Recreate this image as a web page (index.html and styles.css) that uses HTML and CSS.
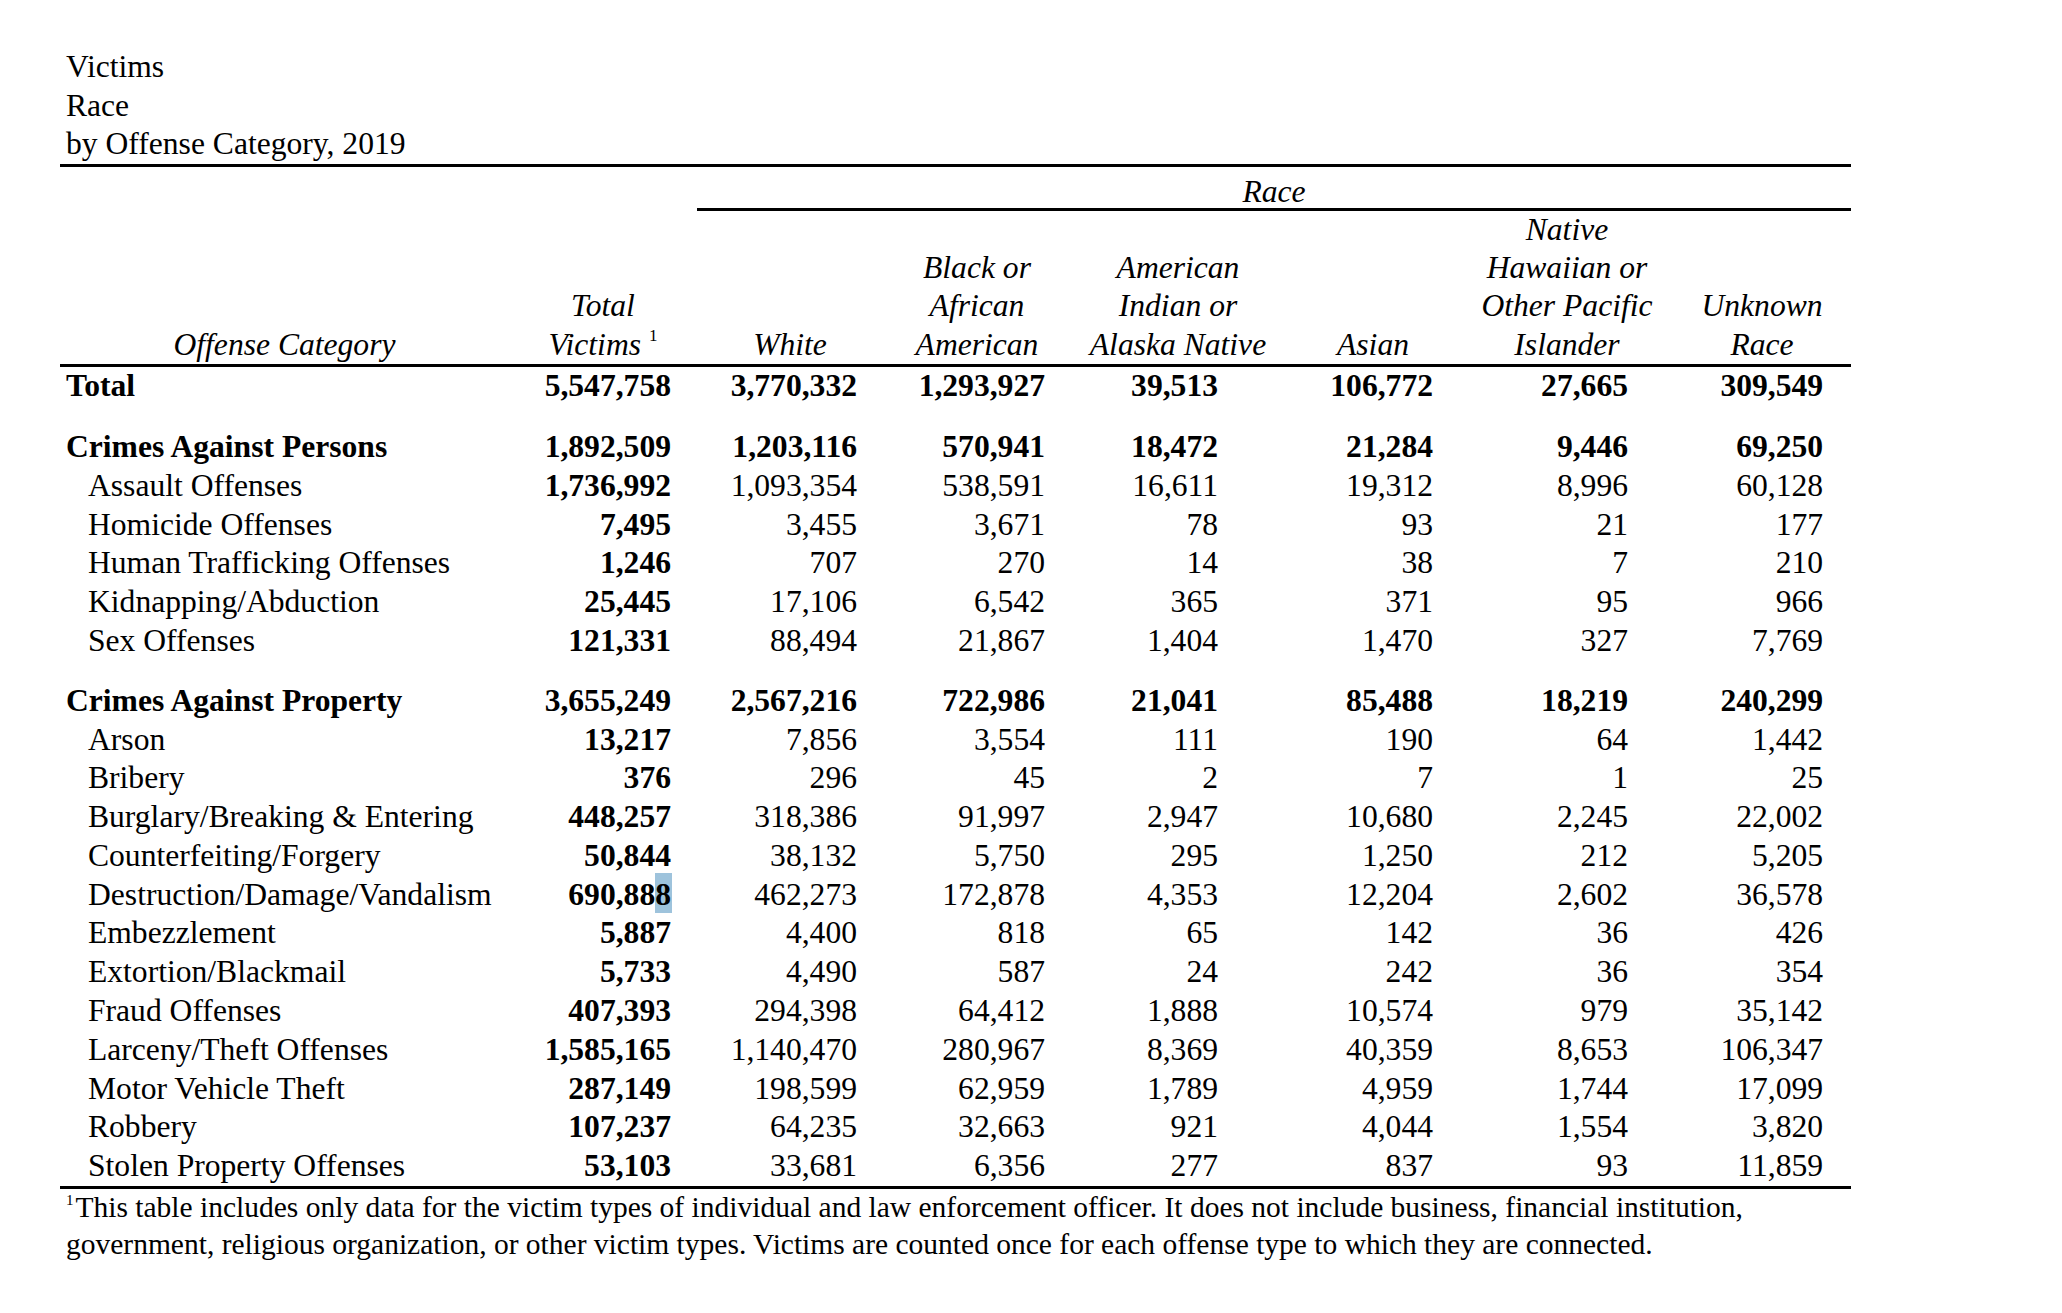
FILE: index.html
```html
<!DOCTYPE html>
<html lang="en">
<head>
<meta charset="utf-8">
<title>Victims Race by Offense Category, 2019</title>
<link rel="stylesheet" href="styles.css">
</head>
<body>
<div class="page">
  <div class="title">
    <div>Victims</div>
    <div>Race</div>
    <div>by Offense Category, 2019</div>
  </div>
  <table class="data">
    <colgroup>
      <col class="c-cat"><col class="c-total"><col class="c-white"><col class="c-black"><col class="c-amind"><col class="c-asian"><col class="c-nhpi"><col class="c-unk">
    </colgroup>
    <thead>
      <tr class="race-row">
        <th colspan="2"></th>
        <th colspan="6" class="race">Race</th>
      </tr>
      <tr class="head-row">
        <th>Offense Category</th>
        <th>Total<br>Victims <sup>1</sup></th>
        <th>White</th>
        <th>Black or<br>African<br>American</th>
        <th>American<br>Indian or<br>Alaska Native</th>
        <th>Asian</th>
        <th>Native<br>Hawaiian or<br>Other Pacific<br>Islander</th>
        <th>Unknown<br>Race</th>
      </tr>
    </thead>
    <tbody>
      <tr class="bold"><td class="cat">Total</td><td class="n1">5,547,758</td><td class="n2">3,770,332</td><td class="n3">1,293,927</td><td class="n4">39,513</td><td class="n5">106,772</td><td class="n6">27,665</td><td class="n7">309,549</td></tr>
      <tr class="gap"><td colspan="8"></td></tr>
      <tr class="bold"><td class="cat">Crimes Against Persons</td><td class="n1">1,892,509</td><td class="n2">1,203,116</td><td class="n3">570,941</td><td class="n4">18,472</td><td class="n5">21,284</td><td class="n6">9,446</td><td class="n7">69,250</td></tr>
      <tr><td class="sub">Assault Offenses</td><td class="n1">1,736,992</td><td class="n2">1,093,354</td><td class="n3">538,591</td><td class="n4">16,611</td><td class="n5">19,312</td><td class="n6">8,996</td><td class="n7">60,128</td></tr>
      <tr><td class="sub">Homicide Offenses</td><td class="n1">7,495</td><td class="n2">3,455</td><td class="n3">3,671</td><td class="n4">78</td><td class="n5">93</td><td class="n6">21</td><td class="n7">177</td></tr>
      <tr><td class="sub">Human Trafficking Offenses</td><td class="n1">1,246</td><td class="n2">707</td><td class="n3">270</td><td class="n4">14</td><td class="n5">38</td><td class="n6">7</td><td class="n7">210</td></tr>
      <tr><td class="sub">Kidnapping/Abduction</td><td class="n1">25,445</td><td class="n2">17,106</td><td class="n3">6,542</td><td class="n4">365</td><td class="n5">371</td><td class="n6">95</td><td class="n7">966</td></tr>
      <tr><td class="sub">Sex Offenses</td><td class="n1">121,331</td><td class="n2">88,494</td><td class="n3">21,867</td><td class="n4">1,404</td><td class="n5">1,470</td><td class="n6">327</td><td class="n7">7,769</td></tr>
      <tr class="gap2"><td colspan="8"></td></tr>
      <tr class="bold"><td class="cat">Crimes Against Property</td><td class="n1">3,655,249</td><td class="n2">2,567,216</td><td class="n3">722,986</td><td class="n4">21,041</td><td class="n5">85,488</td><td class="n6">18,219</td><td class="n7">240,299</td></tr>
      <tr><td class="sub">Arson</td><td class="n1">13,217</td><td class="n2">7,856</td><td class="n3">3,554</td><td class="n4">111</td><td class="n5">190</td><td class="n6">64</td><td class="n7">1,442</td></tr>
      <tr><td class="sub">Bribery</td><td class="n1">376</td><td class="n2">296</td><td class="n3">45</td><td class="n4">2</td><td class="n5">7</td><td class="n6">1</td><td class="n7">25</td></tr>
      <tr><td class="sub">Burglary/Breaking &amp; Entering</td><td class="n1">448,257</td><td class="n2">318,386</td><td class="n3">91,997</td><td class="n4">2,947</td><td class="n5">10,680</td><td class="n6">2,245</td><td class="n7">22,002</td></tr>
      <tr><td class="sub">Counterfeiting/Forgery</td><td class="n1">50,844</td><td class="n2">38,132</td><td class="n3">5,750</td><td class="n4">295</td><td class="n5">1,250</td><td class="n6">212</td><td class="n7">5,205</td></tr>
      <tr><td class="sub">Destruction/Damage/Vandalism</td><td class="n1">690,88<span class="sel">8</span></td><td class="n2">462,273</td><td class="n3">172,878</td><td class="n4">4,353</td><td class="n5">12,204</td><td class="n6">2,602</td><td class="n7">36,578</td></tr>
      <tr><td class="sub">Embezzlement</td><td class="n1">5,887</td><td class="n2">4,400</td><td class="n3">818</td><td class="n4">65</td><td class="n5">142</td><td class="n6">36</td><td class="n7">426</td></tr>
      <tr><td class="sub">Extortion/Blackmail</td><td class="n1">5,733</td><td class="n2">4,490</td><td class="n3">587</td><td class="n4">24</td><td class="n5">242</td><td class="n6">36</td><td class="n7">354</td></tr>
      <tr><td class="sub">Fraud Offenses</td><td class="n1">407,393</td><td class="n2">294,398</td><td class="n3">64,412</td><td class="n4">1,888</td><td class="n5">10,574</td><td class="n6">979</td><td class="n7">35,142</td></tr>
      <tr><td class="sub">Larceny/Theft Offenses</td><td class="n1">1,585,165</td><td class="n2">1,140,470</td><td class="n3">280,967</td><td class="n4">8,369</td><td class="n5">40,359</td><td class="n6">8,653</td><td class="n7">106,347</td></tr>
      <tr><td class="sub">Motor Vehicle Theft</td><td class="n1">287,149</td><td class="n2">198,599</td><td class="n3">62,959</td><td class="n4">1,789</td><td class="n5">4,959</td><td class="n6">1,744</td><td class="n7">17,099</td></tr>
      <tr><td class="sub">Robbery</td><td class="n1">107,237</td><td class="n2">64,235</td><td class="n3">32,663</td><td class="n4">921</td><td class="n5">4,044</td><td class="n6">1,554</td><td class="n7">3,820</td></tr>
      <tr class="last"><td class="sub">Stolen Property Offenses</td><td class="n1">53,103</td><td class="n2">33,681</td><td class="n3">6,356</td><td class="n4">277</td><td class="n5">837</td><td class="n6">93</td><td class="n7">11,859</td></tr>
    </tbody>
  </table>
  <p class="note"><sup>1</sup>This table includes only data for the victim types of individual and law enforcement officer. It does not include business, financial institution, government, religious organization, or other victim types. Victims are counted once for each offense type to which they are connected.</p>
</div>
</body>
</html>
```

FILE: styles.css
```css
html, body {
  margin: 0;
  padding: 0;
  background: #fff;
}

body {
  font-family: "Liberation Serif", "Times New Roman", serif;
  color: #000;
  font-size: 31.6px;
}

.page {
  padding: 48px 0 0 60px;
  width: 1791px;
}

.title {
  padding-left: 6px;
  line-height: 38.5px;
  border-bottom: 3px solid #000;
}

.data {
  width: 1791px;
  table-layout: fixed;
  border-collapse: separate;
  border-spacing: 0;
}

.c-cat { width: 449px; }
.c-total { width: 188px; }
.c-white { width: 186px; }
.c-black { width: 188px; }
.c-amind { width: 214px; }
.c-asian { width: 176px; }
.c-nhpi { width: 212px; }
.c-unk { width: 178px; }

th, td {
  padding: 0;
  font-weight: normal;
}

th {
  font-style: italic;
  text-align: center;
  vertical-align: bottom;
}

.race-row th {
  padding-top: 8px;
  line-height: 33px;
}

.race-row .race {
  border-bottom: 3px solid #000;
}

.head-row th {
  line-height: 38.4px;
  border-bottom: 3px solid #000;
}

.head-row sup {
  font-size: 17px;
  line-height: 0;
  font-style: normal;
  vertical-align: 14px;
}

td {
  line-height: 38.8px;
  text-align: right;
  white-space: nowrap;
}

.bold td {
  font-weight: bold;
}

td.cat {
  text-align: left;
  padding-left: 6px;
}

td.sub {
  text-align: left;
  padding-left: 28px;
}

td.n1 { font-weight: bold; padding-right: 26px; }
td.n2 { padding-right: 26px; }
td.n3 { padding-right: 26px; }
td.n4 { padding-right: 67px; }
td.n5 { padding-right: 28px; }
td.n6 { padding-right: 45px; }
td.n7 { padding-right: 28px; }

.gap td {
  height: 22px;
  line-height: 0;
}

.gap2 td {
  height: 21px;
  line-height: 0;
}

.last td {
  border-bottom: 3px solid #000;
}

.sel {
  background: #9ec3dc;
  padding: 4px 1px 1px 0;
  margin-right: -1px;
}

.note {
  margin: 0;
  padding-left: 6px;
  font-size: 29.5px;
  line-height: 37px;
}

.note sup {
  font-size: 15px;
  line-height: 0;
  vertical-align: 12px;
  margin-right: 2px;
}
```
